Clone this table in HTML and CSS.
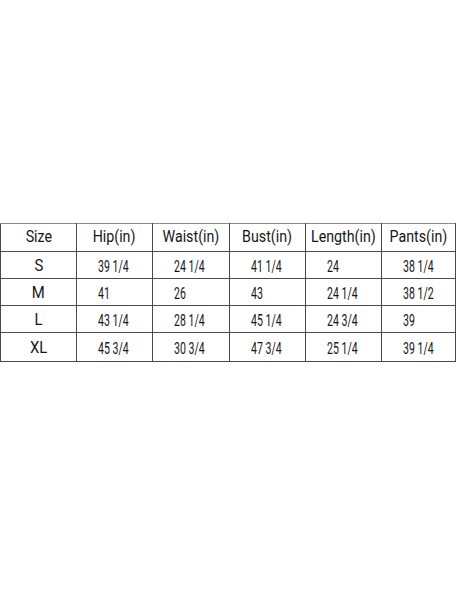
FILE: index.html
```html
<!DOCTYPE html>
<html>
<head>
<meta charset="utf-8">
<link rel="stylesheet" href="styles.css">
</head>
<body>
<table class="chart">
  <colgroup>
    <col class="c1"><col class="c2"><col class="c3"><col class="c4"><col class="c5"><col class="c6">
  </colgroup>
  <tr class="head">
    <th><span>Size</span></th>
    <th><span>Hip(in)</span></th>
    <th><span>Waist(in)</span></th>
    <th><span>Bust(in)</span></th>
    <th><span>Length(in)</span></th>
    <th><span>Pants(in)</span></th>
  </tr>
  <tr class="r1">
    <td class="size"><span>S</span></td>
    <td><span>39 1/4</span></td>
    <td><span>24 1/4</span></td>
    <td><span>41 1/4</span></td>
    <td><span>24</span></td>
    <td><span>38 1/4</span></td>
  </tr>
  <tr class="r2">
    <td class="size"><span>M</span></td>
    <td><span>41</span></td>
    <td><span>26</span></td>
    <td><span>43</span></td>
    <td><span>24 1/4</span></td>
    <td><span>38 1/2</span></td>
  </tr>
  <tr class="r3">
    <td class="size"><span>L</span></td>
    <td><span>43 1/4</span></td>
    <td><span>28 1/4</span></td>
    <td><span>45 1/4</span></td>
    <td><span>24 3/4</span></td>
    <td><span>39</span></td>
  </tr>
  <tr class="r4">
    <td class="size"><span>XL</span></td>
    <td><span>45 3/4</span></td>
    <td><span>30 3/4</span></td>
    <td><span>47 3/4</span></td>
    <td><span>25 1/4</span></td>
    <td><span>39 1/4</span></td>
  </tr>
</table>
</body>
</html>
```
FILE: styles.css
```css
html, body {
  margin: 0;
  padding: 0;
  background: #ffffff;
}
body {
  font-family: Roboto, "Liberation Sans", sans-serif;
  color: #161616;
}
.chart {
  margin-top: 223px;
  border-collapse: collapse;
  table-layout: fixed;
  width: 455px;
}
.c1 { width: 76px; }
.c2 { width: 76px; }
.c3 { width: 77px; }
.c4 { width: 76px; }
.c5 { width: 76px; }
.c6 { width: 74px; }
.chart th, .chart td {
  border: 1px solid #4a4a4a;
  padding: 0;
  overflow: visible;
  white-space: nowrap;
  vertical-align: middle;
}
.chart tr:first-child th {
  border-top-color: #8a8a8a;
}
.head { height: 28px; }
.r1, .r2, .r3 { height: 27px; }
.r4 { height: 29px; }
.head th {
  font-weight: 400;
  font-size: 16px;
  text-align: center;
  line-height: 18px;
}
.head th span {
  display: inline-block;
  transform: scaleX(0.89);
  transform-origin: center;
  position: relative;
  top: -1px;
}
.chart td {
  font-size: 17px;
  line-height: 18px;
  text-align: left;
  padding-left: 21px;
}
.chart td span {
  display: inline-block;
  transform: scaleX(0.62);
  transform-origin: left center;
  position: relative;
  top: 1px;
}
.chart td.size {
  text-align: center;
  padding-left: 0;
  font-size: 16.5px;
}
.chart td.size span {
  transform: scaleX(0.9);
  transform-origin: center;
}
```
